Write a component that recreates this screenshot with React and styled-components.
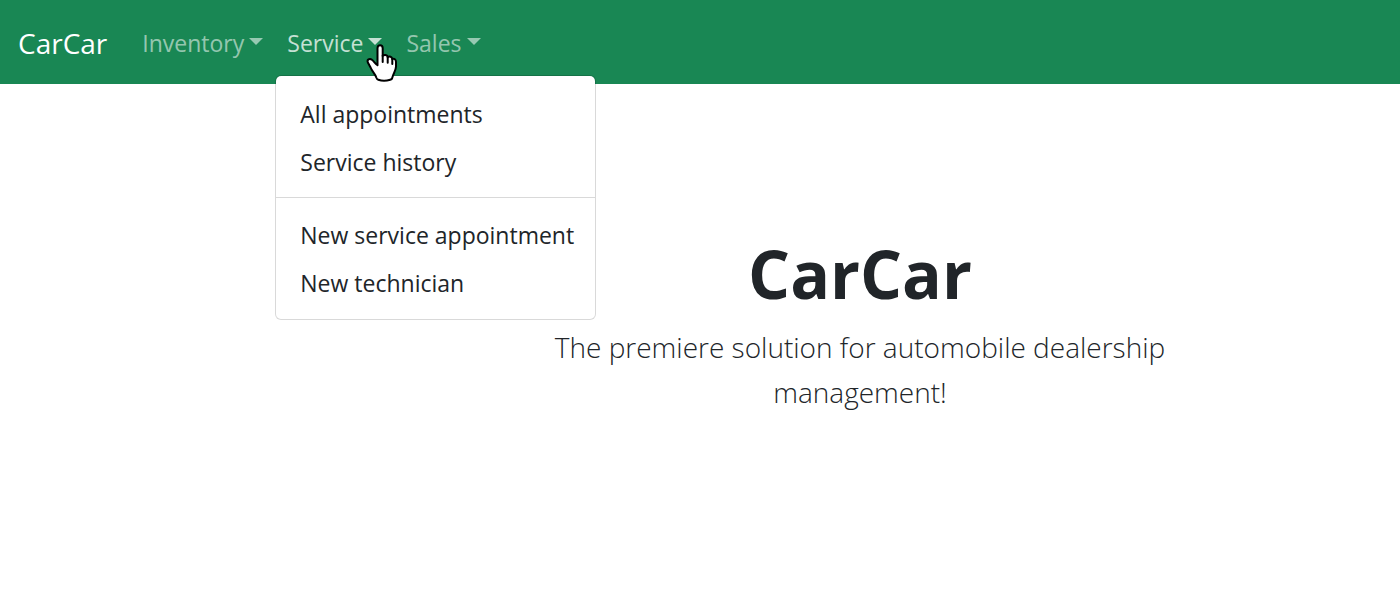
import React from "react";
import styled, { createGlobalStyle } from "styled-components";

const GlobalStyle = createGlobalStyle`
  *, *::before, *::after { box-sizing: border-box; }
  body {
    margin: 0;
    background: #fff;
    color: #212529;
    font-family: "Open Sans", "Noto Sans", sans-serif;
    font-size: 23px;
    line-height: 36px;
  }
`;

const Navbar = styled.nav`
  display: flex;
  align-items: center;
  gap: 23px;
  padding: 12px 18px;
  background: #198754;
`;

const Brand = styled.a`
  color: #fff;
  font-size: 28px;
  line-height: 44px;
  padding: 9px 0 7px;
  text-decoration: none;
`;

const NavList = styled.ul`
  display: flex;
  margin: 0;
  padding: 0;
  list-style: none;
`;

const NavItem = styled.li`
  position: relative;
`;

const Toggle = styled.button`
  display: flex;
  align-items: center;
  gap: 5px;
  padding: 13px 12px 11px;
  border: 0;
  background: none;
  font: inherit;
  color: rgba(255, 255, 255, ${(p) => (p.$active ? 0.75 : 0.55)});
  cursor: pointer;

  &::after {
    content: "";
    margin-bottom: 3px;
    border-top: 7px solid;
    border-left: 7px solid transparent;
    border-right: 7px solid transparent;
  }
`;

const Menu = styled.ul`
  position: absolute;
  top: calc(100% + 3px);
  left: 0;
  width: 321px;
  margin: 0;
  padding: 14px 0 12px;
  list-style: none;
  background: #fff;
  background-clip: padding-box;
  border: 1px solid rgba(0, 0, 0, 0.15);
  border-radius: 6px;
`;

const MenuLink = styled.a`
  display: block;
  padding: 6px 20px 6px 24px;
  color: #212529;
  text-decoration: none;
  white-space: nowrap;
`;

const Divider = styled.hr`
  margin: 11px 0 13px;
  border: 0;
  border-top: 1px solid rgba(0, 0, 0, 0.15);
`;

const Pointer = styled.svg`
  position: absolute;
  right: -4px;
  top: 32px;
  width: 32px;
  height: 38px;
  pointer-events: none;
`;

const Hero = styled.main`
  padding: 153px 0 72px 320px;
  text-align: center;
`;

const Title = styled.h1`
  margin: 0;
  font-size: 66px;
  line-height: 72px;
  font-weight: 700;
`;

const Lead = styled.p`
  max-width: 660px;
  margin: 16px auto 0;
  font-size: 28px;
  line-height: 45px;
  font-weight: 300;
`;

const menus = [
  { label: "Inventory" },
  {
    label: "Service",
    open: true,
    groups: [
      ["All appointments", "Service history"],
      ["New service appointment", "New technician"],
    ],
  },
  { label: "Sales" },
];

function HandPointer() {
  return (
    <Pointer viewBox="0 0 32 38" aria-hidden="true">
      <path
        d="M11.5 4.2C11.5 0.3 16.7 0.3 16.7 4.2V12C18.1 10.2 21.6 10.7 21.7 13.3C23.4 11.9 26.1 12.7 26.3 15.1C28.2 14.2 30 15.5 30 18V22.5C30 26 27.6 28.8 26.2 34C26 35.2 25.4 35.5 24.2 35.8C20.5 37 15.5 37 12.3 35.8C11 35.4 10.7 34.6 10.3 33.5C9 29.5 6.1 27.5 4.6 23.5L2 18.7C0.5 15.8 3.6 13.8 5.9 15.8C8 17.4 9 19.7 11.5 21.2Z"
        fill="#fff"
        stroke="#000"
        strokeWidth="2"
        strokeLinejoin="round"
      />
      <path
        d="M16.7 11.5V18M21.7 13.3V18.8M26.3 15.2V20"
        fill="none"
        stroke="#000"
        strokeWidth="2"
        strokeLinecap="round"
      />
    </Pointer>
  );
}

export default function App() {
  return (
    <>
      <GlobalStyle />
      <Navbar>
        <Brand href="#">CarCar</Brand>
        <NavList>
          {menus.map(({ label, open, groups }) => (
            <NavItem key={label}>
              <Toggle type="button" $active={open} aria-expanded={!!open}>
                {label}
              </Toggle>
              {open && (
                <Menu>
                  {groups.map((items, i) => (
                    <React.Fragment key={i}>
                      {i > 0 && (
                        <li>
                          <Divider />
                        </li>
                      )}
                      {items.map((item) => (
                        <li key={item}>
                          <MenuLink href="#">{item}</MenuLink>
                        </li>
                      ))}
                    </React.Fragment>
                  ))}
                </Menu>
              )}
              {open && <HandPointer />}
            </NavItem>
          ))}
        </NavList>
      </Navbar>
      <Hero>
        <Title>CarCar</Title>
        <Lead>The premiere solution for automobile dealership management!</Lead>
      </Hero>
    </>
  );
}
